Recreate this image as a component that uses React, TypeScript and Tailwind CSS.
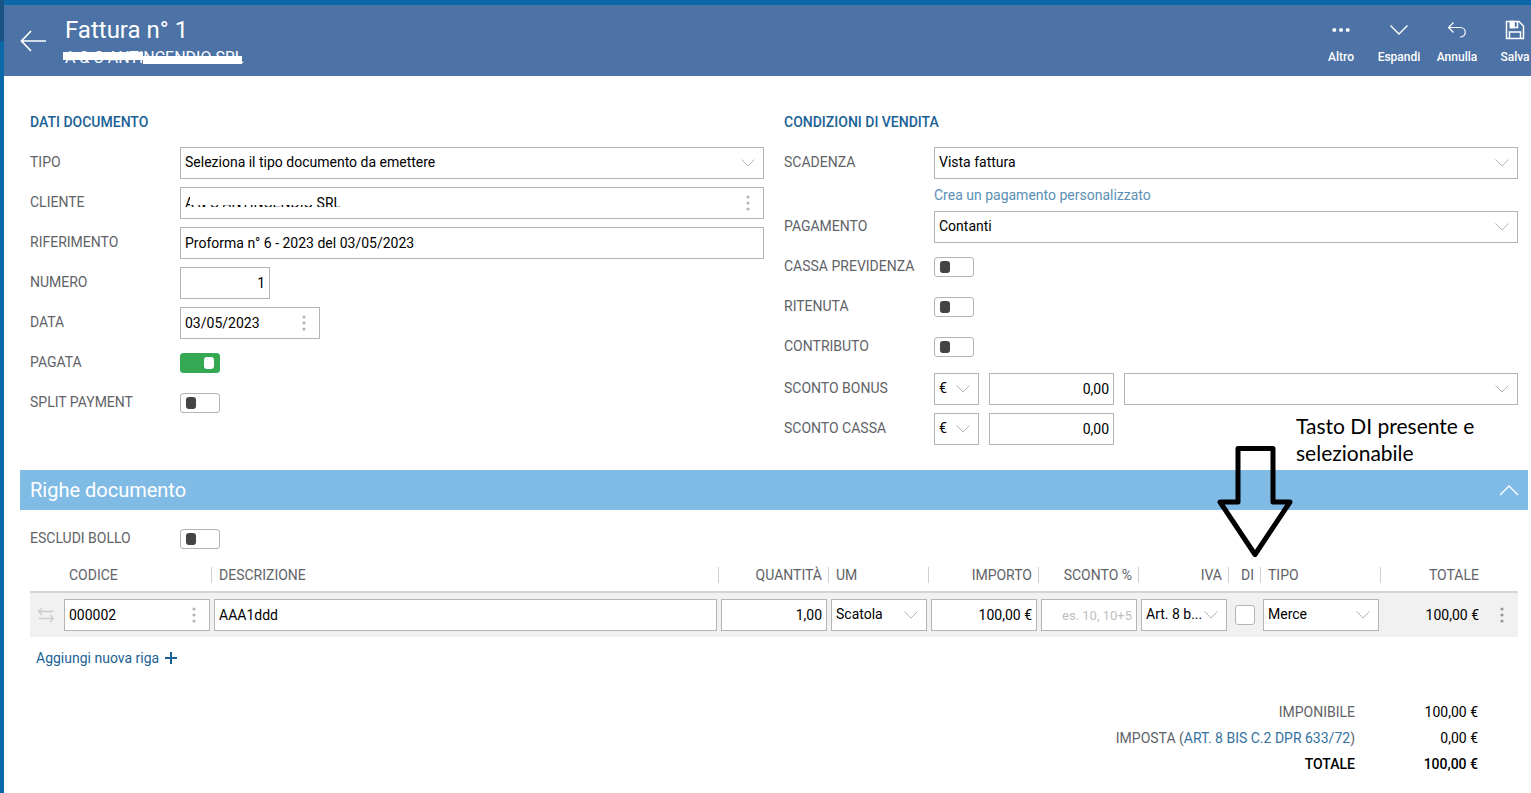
import React, { useId, useState } from "react";

type IconProps = { className?: string };

function ChevronDown({ className = "" }: IconProps) {
  return (
    <svg viewBox="0 0 14 8" fill="none" stroke="currentColor" className={className} aria-hidden="true">
      <path d="M0.5 0.5 7 7 13.5 0.5" />
    </svg>
  );
}

function Kebab({ className = "" }: IconProps) {
  return (
    <svg viewBox="0 0 4 16" fill="currentColor" className={className} aria-hidden="true">
      <circle cx="2" cy="2" r="1.6" />
      <circle cx="2" cy="8" r="1.6" />
      <circle cx="2" cy="14" r="1.6" />
    </svg>
  );
}

const box = "h-8 w-full border border-[#b5b5b5] bg-white px-1 text-sm text-black outline-none";

function TextField({
  id,
  value,
  right = false,
  menu = false,
  placeholder,
  label,
}: {
  id?: string;
  value?: string;
  right?: boolean;
  menu?: boolean;
  placeholder?: string;
  label?: string;
}) {
  return (
    <div className="relative w-full">
      <input
        id={id}
        aria-label={label}
        defaultValue={value}
        placeholder={placeholder}
        className={`${box} block placeholder:text-[13px] placeholder:text-[#c0c0c0] ${right ? "text-right" : ""}`}
      />
      {menu && (
        <button type="button" aria-label="Opzioni" className="absolute inset-y-0 right-3 flex items-center px-[2px] text-[#b5b5b5]">
          <Kebab className="h-4 w-1" />
        </button>
      )}
    </div>
  );
}

function SelectField({ id, options, label }: { id?: string; options: string[]; label?: string }) {
  return (
    <div className="relative w-full">
      <select id={id} aria-label={label} className={`${box} block appearance-none rounded-none pb-[2px]`}>
        {options.map((o) => (
          <option key={o}>{o}</option>
        ))}
      </select>
      <ChevronDown className="pointer-events-none absolute right-[9px] top-3 h-2 w-[14px] text-[#b5b5b5]" />
    </div>
  );
}

function Toggle({ id, on = false }: { id: string; on?: boolean }) {
  const [checked, setChecked] = useState(on);
  return (
    <span className="relative flex h-5 w-10">
      <input
        id={id}
        type="checkbox"
        role="switch"
        checked={checked}
        onChange={() => setChecked(!checked)}
        className="h-5 w-10 appearance-none rounded-[3px] border border-[#b5b5b5] bg-white checked:border-[#34a853] checked:bg-[#34a853]"
      />
      <span
        className={`pointer-events-none absolute top-1 h-3 w-[10px] rounded-[3px] ${
          checked ? "right-[6px] bg-white" : "left-[6px] bg-[#444444]"
        }`}
      />
    </span>
  );
}

function Row({ label, children }: { label: string; children: (id: string) => React.ReactNode }) {
  const id = useId();
  return (
    <div className="flex h-10 items-center">
      <label htmlFor={id} className="w-[150px] shrink-0 pb-[2px] text-sm text-[#5f6368]">
        {label}
      </label>
      <div className="flex min-w-0 flex-1 items-center">{children(id)}</div>
    </div>
  );
}

function Action({ label, children }: { label: string; children: React.ReactNode }) {
  return (
    <button type="button" className="flex w-[58px] flex-col items-center gap-[9px] text-xs font-medium text-white">
      <span className="flex h-5 items-center justify-center">{children}</span>
      {label}
    </button>
  );
}

function Discount({ label, extra = false }: { label: string; extra?: boolean }) {
  return (
    <Row label={label}>
      {(id) => (
        <>
          <div className="mr-[10px] w-[45px] shrink-0">
            <SelectField label={`${label} valuta`} options={["€", "%"]} />
          </div>
          <div className="mr-[10px] w-[125px] shrink-0">
            <TextField id={id} value="0,00" right />
          </div>
          {extra && <SelectField label={`${label} causale`} options={[""]} />}
        </>
      )}
    </Row>
  );
}

function Th({ children, right = false, last = false }: { children?: React.ReactNode; right?: boolean; last?: boolean }) {
  return (
    <th className="p-0 font-normal">
      <div
        className={`flex h-4 items-center pl-[7px] ${right ? "justify-end" : ""} ${
          last ? "pr-[7px]" : "border-r border-[#cfcfcf] pr-[6px]"
        }`}
      >
        {children}
      </div>
    </th>
  );
}

export default function App() {
  return (
    <div className="flex min-h-screen overflow-x-hidden bg-white font-['Roboto',sans-serif] text-sm text-black">
      <aside className="w-1 shrink-0 bg-[#0a67a8]">
        <div className="h-[41px] bg-[#1a5283]" />
      </aside>
      <div className="min-w-0 flex-1 border-t-[5px] border-[#0a67a8]">
        <header className="flex h-[71px] items-start overflow-hidden bg-[#4d72a5] text-white">
          <button type="button" aria-label="Indietro" className="ml-4 mt-6 flex">
            <svg viewBox="0 0 28 24" fill="none" stroke="currentColor" strokeWidth="1.7" className="h-6 w-7">
              <path d="M26 12H1.500M11 2 1.500 12l9.500 10" />
            </svg>
          </button>
          <div className="ml-[17px] mt-[9px] flex-1">
            <h1 className="text-2xl leading-8">Fattura n° 1</h1>
            <div className="relative w-max text-base leading-6">
              A &amp; C ANTINCENDIO SRL
              <span className="absolute -left-[2px] top-[6px] h-2 w-20 bg-white" />
              <span className="absolute left-[78px] top-[10px] h-2 w-[99px] bg-white" />
            </div>
          </div>
          <nav className="-mr-[13px] mt-[15px] flex shrink-0">
            <Action label="Altro">
              <svg viewBox="0 0 18 4" fill="currentColor" className="h-1 w-[18px]">
                <rect x="0.500" y="0.300" width="3.600" height="3.400" rx="1" />
                <rect x="7.200" y="0.300" width="3.600" height="3.400" rx="1" />
                <rect x="13.900" y="0.300" width="3.600" height="3.400" rx="1" />
              </svg>
            </Action>
            <Action label="Espandi">
              <svg viewBox="0 0 18 10" fill="none" stroke="currentColor" strokeWidth="1.400" className="h-[10px] w-[18px]">
                <path d="M0.500 0.500 9 9l8.500-8.500" />
              </svg>
            </Action>
            <Action label="Annulla">
              <svg viewBox="0 0 20 18" fill="none" stroke="currentColor" strokeWidth="1.200" className="h-[18px] w-5">
                <path d="M6.500 1.500 1.500 6.500l5 5M1.500 6.500H13c7 0 7 9.500 0 9.500" />
              </svg>
            </Action>
            <Action label="Salva">
              <svg viewBox="0 0 20 20" fill="none" stroke="currentColor" strokeWidth="1.500" className="h-5 w-5">
                <path d="M1.500 1.500H14l4.500 4.500v12.500h-17zM4.500 18.500v-6.500h11v6.500M5.500 1.500v6h7v-6" />
                <path d="M5.500 1.500h3.500v6h-3.500z" fill="currentColor" />
              </svg>
            </Action>
          </nav>
        </header>

        <main className="pb-2 pt-9">
          <div className="grid grid-cols-2 gap-5 pl-[26px] pr-[13px]">
            <section>
              <h2 className="mb-[11px] text-sm leading-5 font-medium text-[#1a6296]">DATI DOCUMENTO</h2>
              <Row label="TIPO">{(id) => <SelectField id={id} options={["Seleziona il tipo documento da emettere"]} />}</Row>
              <Row label="CLIENTE">
                {(id) => (
                  <div className="relative w-full">
                    <TextField id={id} value="A & C ANTINCENDIO SRL" menu />
                    <span className="pointer-events-none absolute left-[10px] top-2 h-[10px] w-[123px] bg-white" />
                    <span className="pointer-events-none absolute left-1 top-5 h-[6px] w-[160px] bg-white" />
                  </div>
                )}
              </Row>
              <Row label="RIFERIMENTO">{(id) => <TextField id={id} value="Proforma n° 6 - 2023 del 03/05/2023" />}</Row>
              <Row label="NUMERO">
                {(id) => (
                  <div className="w-[90px]">
                    <TextField id={id} value="1" right />
                  </div>
                )}
              </Row>
              <Row label="DATA">
                {(id) => (
                  <div className="w-[140px]">
                    <TextField id={id} value="03/05/2023" menu />
                  </div>
                )}
              </Row>
              <Row label="PAGATA">{(id) => <Toggle id={id} on />}</Row>
              <Row label="SPLIT PAYMENT">{(id) => <Toggle id={id} />}</Row>
            </section>

            <section>
              <h2 className="mb-[11px] text-sm leading-5 font-medium text-[#1a6296]">CONDIZIONI DI VENDITA</h2>
              <Row label="SCADENZA">{(id) => <SelectField id={id} options={["Vista fattura"]} />}</Row>
              <div className="flex h-6 items-center pl-[150px]">
                <a href="#pagamento" className="text-[#5a8fb5]">
                  Crea un pagamento personalizzato
                </a>
              </div>
              <Row label="PAGAMENTO">{(id) => <SelectField id={id} options={["Contanti"]} />}</Row>
              <Row label="CASSA PREVIDENZA">{(id) => <Toggle id={id} />}</Row>
              <Row label="RITENUTA">{(id) => <Toggle id={id} />}</Row>
              <Row label="CONTRIBUTO">{(id) => <Toggle id={id} />}</Row>
              <div className="pt-[2px]">
                <Discount label="SCONTO BONUS" extra />
                <Discount label="SCONTO CASSA" />
              </div>
            </section>
          </div>

          <section className="mt-[21px]">
            <div className="relative ml-4 mr-[3px] flex h-10 items-center justify-between bg-[#7fbbe5] pl-[10px] pr-[9px] text-white">
              <h2 className="text-xl">Righe documento</h2>
              <button type="button" aria-label="Comprimi">
                <svg viewBox="0 0 20 12" fill="none" stroke="currentColor" strokeWidth="1.400" className="h-3 w-5">
                  <path d="M1 11 10 2l9 9" />
                </svg>
              </button>
              <div className="absolute bottom-0 right-[42px] h-[98px] w-[190px] font-['Lato',sans-serif] text-[21px] leading-[27px] text-black">
                Tasto DI presente e selezionabile
              </div>
              <svg
                viewBox="0 0 78 112"
                fill="none"
                stroke="black"
                strokeWidth="5"
                strokeLinejoin="round"
                className="absolute -top-6 right-[234px] h-28 w-[78px]"
                aria-hidden="true"
              >
                <path d="M22 2.500h35v53.500h17L39 108.500 4 56h18z" />
              </svg>
            </div>

            <div className="pl-[26px] pr-[13px] pt-[9px]">
              <Row label="ESCLUDI BOLLO">{(id) => <Toggle id={id} />}</Row>
              <table className="w-full table-fixed border-collapse text-left">
                <colgroup>
                  <col className="w-8" />
                  <col className="w-[150px]" />
                  <col />
                  <col className="w-[110px]" />
                  <col className="w-[100px]" />
                  <col className="w-[110px]" />
                  <col className="w-[100px]" />
                  <col className="w-[90px]" />
                  <col className="w-8" />
                  <col className="w-[120px]" />
                  <col className="w-[105px]" />
                  <col className="w-8" />
                </colgroup>
                <thead>
                  <tr className="h-[33px] border-b-2 border-[#d5d5d5] text-[#5f6368]">
                    <Th last />
                    <Th>CODICE</Th>
                    <Th>DESCRIZIONE</Th>
                    <Th right>QUANTITÀ</Th>
                    <Th>UM</Th>
                    <Th right>IMPORTO</Th>
                    <Th right>SCONTO %</Th>
                    <Th right>IVA</Th>
                    <Th right>DI</Th>
                    <Th>TIPO</Th>
                    <Th right last>TOTALE</Th>
                    <Th last />
                  </tr>
                </thead>
                <tbody>
                  <tr className="h-[45px] bg-[#f1f1f1]">
                    <td className="p-0">
                      <svg viewBox="0 0 18 16" fill="none" stroke="#cccccc" strokeWidth="1.300" className="ml-[7px] h-4 w-[18px]" aria-hidden="true">
                        <path d="M16 4.500H1.500M5 1 1.500 4.500 5 8M2 11.500h14.500M13 8l3.500 3.500L13 15" />
                      </svg>
                    </td>
                    <td className="px-[2px] py-0"><TextField label="Codice" value="000002" menu /></td>
                    <td className="px-[2px] py-0"><TextField label="Descrizione" value="AAA1ddd" /></td>
                    <td className="px-[2px] py-0"><TextField label="Quantità" value="1,00" right /></td>
                    <td className="px-[2px] py-0"><SelectField label="Unità di misura" options={["Scatola"]} /></td>
                    <td className="px-[2px] py-0"><TextField label="Importo" value="100,00 €" right /></td>
                    <td className="px-[2px] py-0"><TextField label="Sconto" placeholder="es. 10, 10+5" right /></td>
                    <td className="px-[2px] py-0"><SelectField label="IVA" options={["Art. 8 b..."]} /></td>
                    <td className="p-0">
                      <input
                        type="checkbox"
                        aria-label="DI"
                        className="mx-auto block h-5 w-5 appearance-none rounded-[3px] border border-[#b5b5b5] bg-white checked:bg-[#1a6296]"
                      />
                    </td>
                    <td className="px-[2px] py-0"><SelectField label="Tipo" options={["Merce"]} /></td>
                    <td className="py-0 pl-0 pr-[7px] text-right">100,00 €</td>
                    <td className="p-0">
                      <button type="button" aria-label="Opzioni riga" className="mx-auto flex px-[2px] text-[#999999]">
                        <Kebab className="h-4 w-1" />
                      </button>
                    </td>
                  </tr>
                </tbody>
              </table>
              <button type="button" className="ml-[6px] mt-[11px] flex h-5 items-center gap-[6px] text-[#1a6296]">
                Aggiungi nuova riga
                <svg viewBox="0 0 12 12" stroke="currentColor" strokeWidth="2" className="h-3 w-3" aria-hidden="true">
                  <path d="M6 0v12M0 6h12" />
                </svg>
              </button>

              <dl className="mt-[31px] grid grid-cols-[1fr_123px] pr-10 text-right leading-[26px]">
                <dt className="text-[#5f6368]">IMPONIBILE</dt>
                <dd>100,00 €</dd>
                <dt className="text-[#5f6368]">
                  IMPOSTA (<a href="#imposta" className="text-[#35719f]">ART. 8 BIS C.2 DPR 633/72</a>)
                </dt>
                <dd>0,00 €</dd>
                <dt className="font-medium">TOTALE</dt>
                <dd className="font-medium">100,00 €</dd>
              </dl>
            </div>
          </section>
        </main>
      </div>
    </div>
  );
}
